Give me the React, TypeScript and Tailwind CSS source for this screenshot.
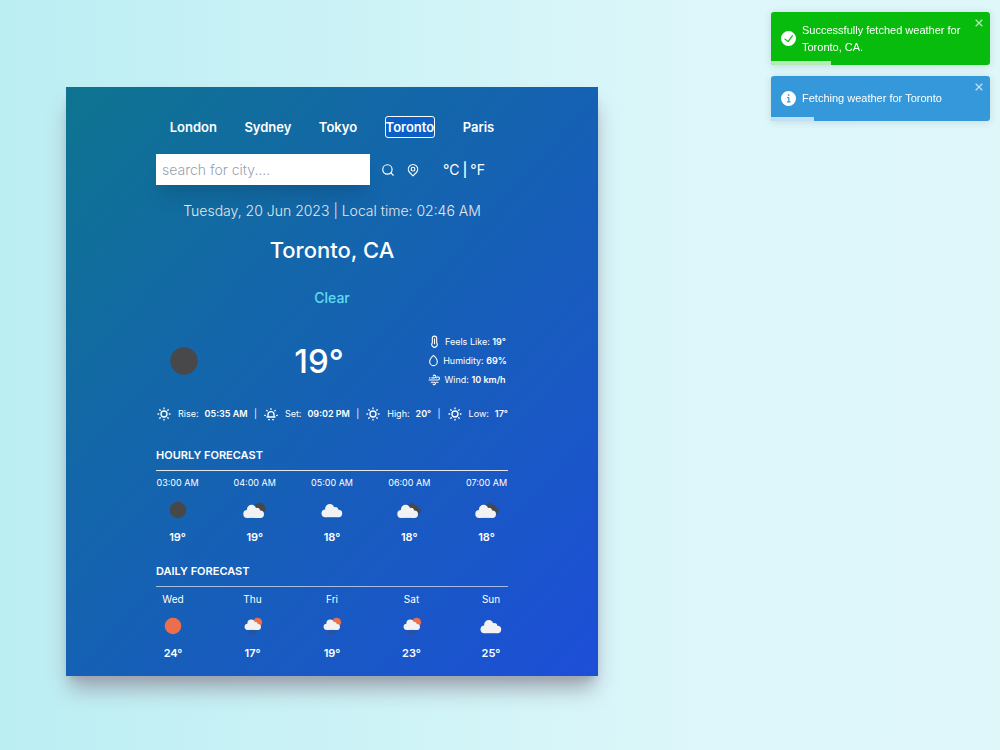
import type { ReactNode } from "react";

const cities = ["London", "Sydney", "Tokyo", "Toronto", "Paris"];

type Kind = "moon" | "sun" | "cloud" | "nightCloud" | "brokenCloud" | "rain";

const hourly: { label: string; kind: Kind; temp: string }[] = [
  { label: "03:00 AM", kind: "moon", temp: "19°" },
  { label: "04:00 AM", kind: "nightCloud", temp: "19°" },
  { label: "05:00 AM", kind: "cloud", temp: "18°" },
  { label: "06:00 AM", kind: "brokenCloud", temp: "18°" },
  { label: "07:00 AM", kind: "brokenCloud", temp: "18°" },
];

const daily: { label: string; kind: Kind; temp: string }[] = [
  { label: "Wed", kind: "sun", temp: "24°" },
  { label: "Thu", kind: "rain", temp: "17°" },
  { label: "Fri", kind: "rain", temp: "19°" },
  { label: "Sat", kind: "rain", temp: "23°" },
  { label: "Sun", kind: "cloud", temp: "25°" },
];

function Cloud({ transform }: { transform?: string }) {
  return (
    <g fill="#f2f2f2" transform={transform}>
      <circle cx="9.2" cy="16" r="3.9" />
      <circle cx="13.6" cy="11.5" r="4.7" />
      <circle cx="19" cy="12.9" r="3.1" />
      <circle cx="22.3" cy="16.2" r="3.700" />
      <path d="M9.200 12.500h13v7.400h-13z" />
    </g>
  );
}

function WeatherIcon({ kind, className }: { kind: Kind; className: string }) {
  return (
    <svg viewBox="0 0 34 24" className={className} aria-hidden="true">
      {kind === "moon" && <circle cx="17" cy="12" r="8.3" fill="#48484a" />}
      {kind === "sun" && <circle cx="17" cy="12" r="8.3" fill="#ec6e4c" />}
      {kind === "cloud" && <Cloud transform="translate(1.2 -.7)" />}
      {kind === "nightCloud" && (
        <>
          <circle cx="21.600" cy="10.700" r="6" fill="#48484a" />
          <Cloud />
        </>
      )}
      {kind === "brokenCloud" && (
        <>
          <path
            d="M15.500 9a4.300 4.300 0 0 1 7.600-2 3.300 3.300 0 0 1 3 3.100 3 3 0 0 1 .5 5.900H20z"
            fill="#48484a"
          />
          <Cloud />
        </>
      )}
      {kind === "rain" && (
        <>
          <circle cx="21.600" cy="8.200" r="4.500" fill="#ec6e4c" />
          <Cloud transform="translate(4.400 .2) scale(.79)" />
          <path
            d="M14.200 16.800l-.7 1.400M17 16.300l-1.800 4M19.800 17.200l-1.500 3M14.200 19.600l-.3.600"
            stroke="#48484a"
            strokeWidth=".8"
            strokeLinecap="round"
          />
        </>
      )}
    </svg>
  );
}

function LineIcon({ children, className }: { children: ReactNode; className: string }) {
  return (
    <svg
      viewBox="0 0 24 24"
      className={className}
      fill="none"
      stroke="currentColor"
      strokeWidth="2"
      strokeLinecap="round"
      strokeLinejoin="round"
      aria-hidden="true"
    >
      {children}
    </svg>
  );
}

function SunIcon() {
  return (
    <LineIcon className="size-4 shrink-0">
      <circle cx="12" cy="12" r="4.500" />
      <path d="M12 3v1M12 20v1M3 12h1M20 12h1M5.640 5.640l.7.7M17.660 17.660l.7.7M5.640 18.360l.7-.7M17.660 6.340l.7-.7" />
    </LineIcon>
  );
}

function SunsetIcon() {
  return (
    <LineIcon className="size-4 shrink-0">
      <path d="M6 16.500h12M7.500 16.500V13a4.500 4.500 0 0 1 9 0v3.500M12 4v1M2.500 14h1M20.500 14h1M5.640 6.640l.7.7M17.660 7.340l.7-.7M8.500 20.500h1M14.500 20.500h1" />
    </LineIcon>
  );
}

function Forecast({
  title,
  items,
  cell,
  text,
  rule,
}: {
  title: string;
  items: typeof hourly;
  cell: string;
  text: string;
  rule: string;
}) {
  return (
    <section>
      <h2 className="text-[11px] leading-[18px] font-semibold">{title}</h2>
      <hr className={rule} />
      <ul className="mt-1 flex justify-between">
        {items.map((item) => (
          <li key={item.label} className={cell}>
            <span className={text}>{item.label}</span>
            <WeatherIcon kind={item.kind} className="mt-[7px] h-6 w-[34px]" />
            <span className="mt-[7px] text-[11px] leading-4 font-semibold">{item.temp}</span>
          </li>
        ))}
      </ul>
    </section>
  );
}

function Toast({
  icon,
  color,
  bar,
  children,
}: {
  icon: ReactNode;
  color: string;
  bar: string;
  children: ReactNode;
}) {
  return (
    <div
      role="alert"
      className={`relative flex items-center overflow-hidden rounded-[3px] pl-[10px] pr-5 text-white shadow-[0_1px_8px_rgba(0,0,0,0.12)] ${color}`}
    >
      {icon}
      <p className="ml-[6px] text-[11px] leading-[17px]">{children}</p>
      <button type="button" aria-label="close" className="absolute top-[7px] right-[7px] opacity-70">
        <svg viewBox="0 0 8 8" className="size-2" stroke="currentColor" strokeWidth="1.300">
          <path d="M.7.7l6.600 6.600M7.300.7L.7 7.300" />
        </svg>
      </button>
      <div className={`absolute bottom-0 left-0 h-1 bg-white/70 ${bar}`} />
    </div>
  );
}

const stats = [
  { icon: <SunIcon />, label: "Rise:", value: "05:35 AM" },
  { icon: <SunsetIcon />, label: "Set:", value: "09:02 PM" },
  { icon: <SunIcon />, label: "High:", value: "20°" },
  { icon: <SunIcon />, label: "Low:", value: "17°" },
];

export default function App() {
  return (
    <div className="min-h-screen bg-[linear-gradient(to_right,#bbeef3,#ddf7fa_70%,#e0f7fa)] px-[66px] py-[87px] font-['Inter',sans-serif]">
      <main className="w-full max-w-[532px] bg-[linear-gradient(to_bottom_right,#0e7490,#1d4ed8)] px-[90px] pt-7 pb-[15px] text-white shadow-[0_16px_21px_-4px_#9ca3af,0_7px_8px_-5px_#9ca3af]">
        <nav className="flex h-[23px] items-center justify-around">
          {cities.map((city) => (
            <button
              key={city}
              type="button"
              className={
                city === "Toronto"
                  ? "rounded-[3px] border border-white bg-[#0a5fc8] text-[13px] leading-5 font-semibold"
                  : "text-[13px] leading-5 font-semibold"
              }
            >
              {city}
            </button>
          ))}
        </nav>

        <div className="mt-4 flex items-center">
          <div className="flex w-3/4 items-center gap-[11px]">
            <input
              type="text"
              aria-label="search for city"
              placeholder="search for city...."
              className="h-[31px] min-w-0 flex-1 bg-white px-[6px] text-[14px] font-light text-gray-700 shadow-[0_16px_20px_-4px_rgba(0,0,0,0.1),0_6px_8px_-5px_rgba(0,0,0,0.1)] outline-none placeholder:text-gray-400"
            />
            <button type="button" aria-label="Search">
              <LineIcon className="size-[14px]">
                <circle cx="11" cy="11" r="8" />
                <path d="M17 17l4 4" />
              </LineIcon>
            </button>
            <button type="button" aria-label="Use my location">
              <LineIcon className="size-[14px]">
                <path d="M6.300 16.300a8 8 0 1 1 11.400 0L12 22z" />
                <circle cx="12" cy="10.500" r="3.200" />
              </LineIcon>
            </button>
          </div>
          <div className="flex w-1/4 items-center justify-center gap-[3px] text-[14px] leading-5">
            <button type="button">°C</button>
            <span className="font-medium">|</span>
            <button type="button">°F</button>
          </div>
        </div>

        <p className="mt-4 text-center text-[14px] leading-5 font-light text-gray-200">
          Tuesday, 20 Jun 2023 | Local time: 02:46 AM
        </p>
        <h1 className="mt-[13px] text-center text-[22px] leading-8 font-medium">Toronto, CA</h1>
        <p className="mt-[22px] text-center text-[14px] leading-5 font-medium text-[#5fdcf3]">Clear</p>

        <div className="mt-6 flex items-center justify-between">
          <WeatherIcon kind="moon" className="h-10 w-14" />
          <p className="text-[33px] leading-[50px] font-medium">19°</p>
          <div className="flex w-[82px] flex-col items-center text-[9px] leading-[19px] whitespace-nowrap">
            <p className="flex items-center gap-1">
              <LineIcon className="size-[13px]">
                <path d="M8 14.500V6a4 4 0 0 1 8 0v8.500a5 5 0 1 1-8 0zM12 7v9" />
              </LineIcon>
              <span>
                Feels Like: <b className="font-semibold">19°</b>
              </span>
            </p>
            <p className="flex items-center gap-[3px]">
              <LineIcon className="size-[13px]">
                <path d="M12 2.500c4 3.500 7 7.500 7 11.700a7 7.300 0 0 1-14 0C5 10 8 6 12 2.500z" />
              </LineIcon>
              <span>
                Humidity: <b className="font-semibold">69%</b>
              </span>
            </p>
            <p className="flex items-center gap-[3px]">
              <LineIcon className="size-[13px]">
                <path d="M7 9h5a2.500 2.500 0 1 0-2.300-3.500M2 13h16.500a2.800 2.800 0 1 0-2.600-4M3 9h.5M6 17h5.500a2.300 2.300 0 1 1-2 3.500M15.500 17h3" />
              </LineIcon>
              <span>
                Wind: <b className="font-semibold">10 km/h</b>
              </span>
            </p>
          </div>
        </div>

        <ul className="mt-[15px] flex h-5 items-center justify-between text-[9px] whitespace-nowrap">
          {stats.map((stat, i) => (
            <li key={stat.label} className="flex items-center gap-[6px]">
              {i > 0 && <span>|</span>}
              {stat.icon}
              <span>{stat.label}</span>
              <b className="font-semibold">{stat.value}</b>
            </li>
          ))}
        </ul>

        <div className="mt-[22px] flex flex-col gap-[17px]">
          <Forecast
            title="HOURLY FORECAST"
            items={hourly}
            cell="flex w-[43px] flex-col items-center whitespace-nowrap"
            text="text-[9px] leading-4"
            rule="mt-[6px] border-t border-gray-200"
          />
          <Forecast
            title="DAILY FORECAST"
            items={daily}
            cell="flex w-[34px] flex-col items-center"
            text="text-[10px] leading-4"
            rule="mt-[6px] border-t border-gray-200/70"
          />
        </div>
      </main>

      <aside className="fixed top-3 right-[10px] flex w-[219px] flex-col gap-[11px] font-['Liberation_Sans',sans-serif]">
        <Toast
          color="h-[53px] bg-[#07bc0c]"
          bar="w-[60px]"
          icon={
            <svg viewBox="0 0 24 24" className="size-[15px] shrink-0" fill="currentColor" aria-hidden="true">
              <path d="M12 0a12 12 0 1012 12A12.014 12.014 0 0012 0zm6.927 8.200l-6.845 9.289a1.011 1.011 0 01-1.430.188l-4.888-3.908a1 1 0 111.250-1.562l4.076 3.261 6.227-8.451a1 1 0 111.610 1.183z" />
            </svg>
          }
        >
          Successfully fetched weather for Toronto, CA.
        </Toast>
        <Toast
          color="h-[45px] bg-[#3498db]"
          bar="w-[43px]"
          icon={
            <svg viewBox="0 0 24 24" className="size-[15px] shrink-0" fill="currentColor" aria-hidden="true">
              <path d="M12 0a12 12 0 1012 12A12.013 12.013 0 0012 0zm.250 5a1.500 1.500 0 11-1.500 1.500 1.500 1.500 0 011.500-1.500zm2.250 13.500h-4a1 1 0 010-2h.750a.250.250 0 00.250-.250v-4.500a.250.250 0 00-.250-.250h-.750a1 1 0 010-2h1a2 2 0 012 2v4.750a.250.250 0 00.250.250h.750a1 1 0 110 2z" />
            </svg>
          }
        >
          Fetching weather for Toronto
        </Toast>
      </aside>
    </div>
  );
}
